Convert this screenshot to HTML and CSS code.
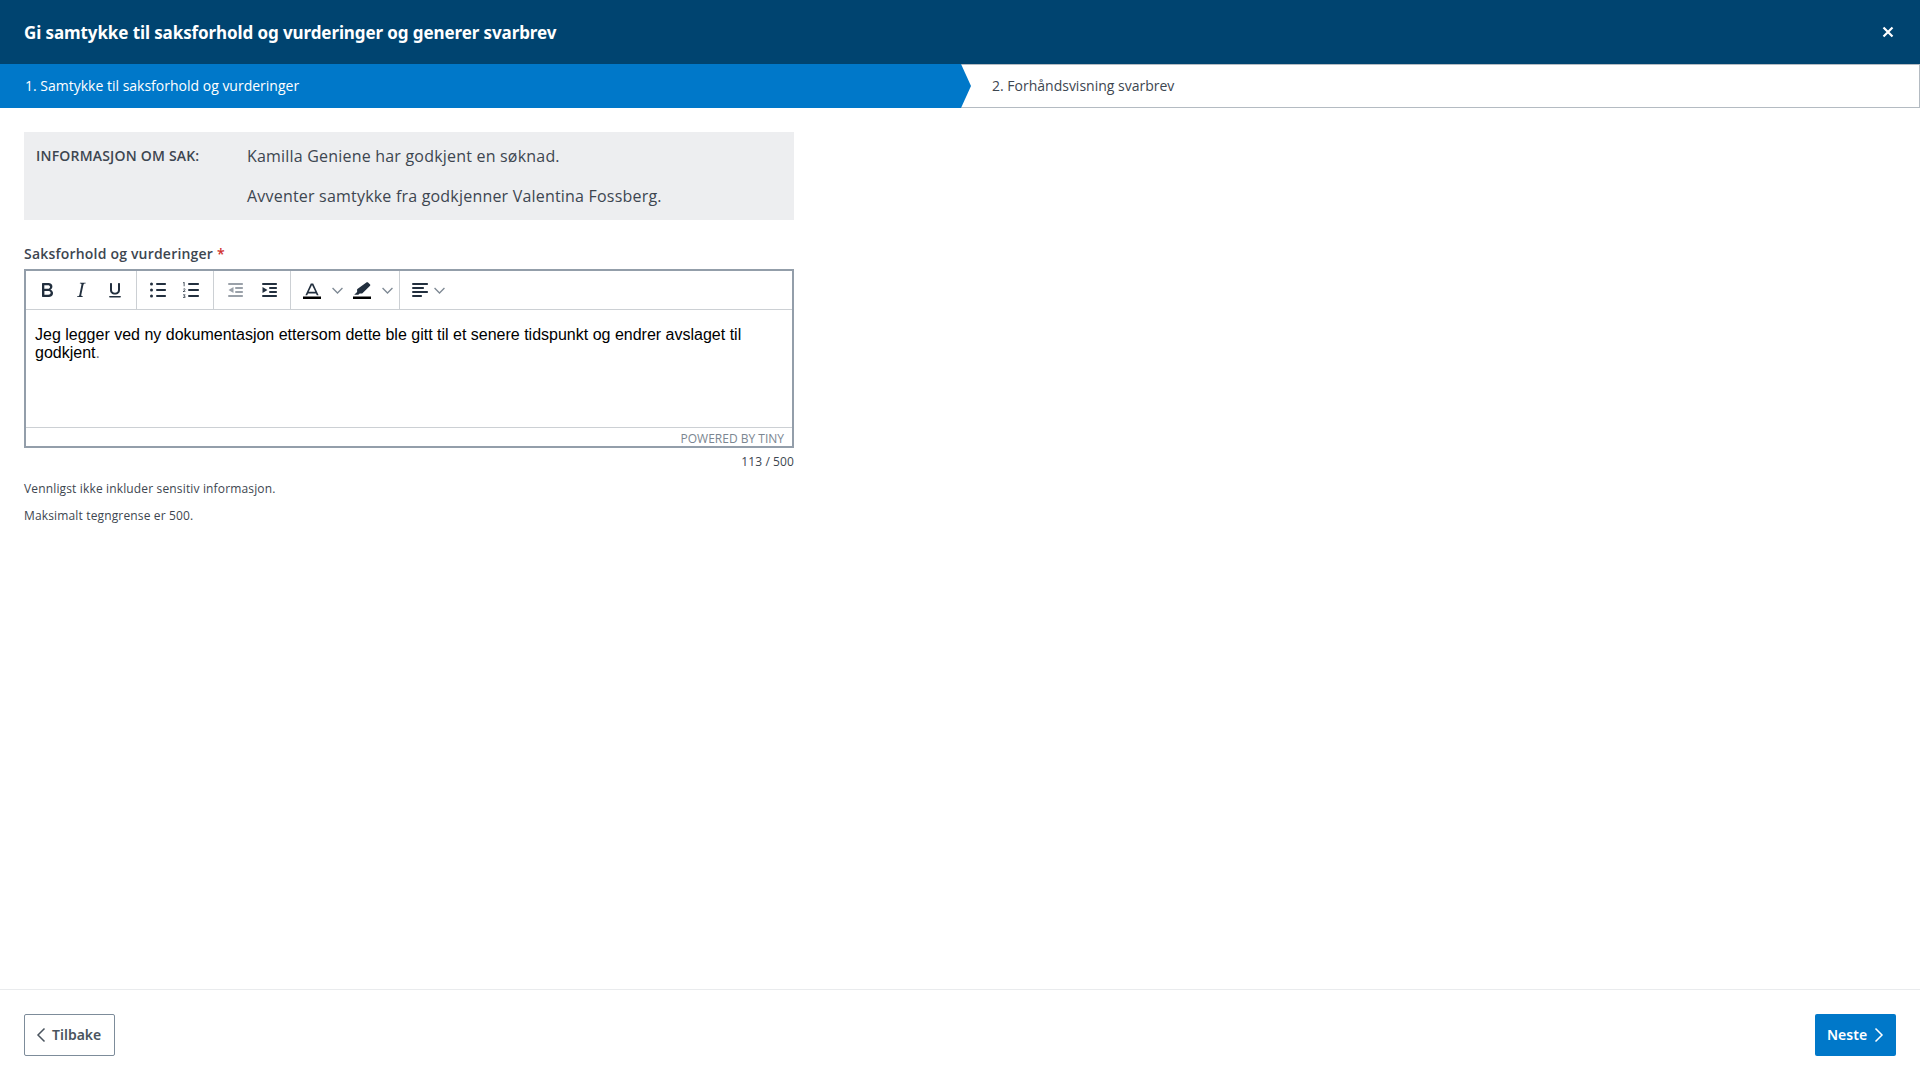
FILE: index.html
```html
<!DOCTYPE html>
<html lang="no">
<head>
<meta charset="utf-8">
<title>Gi samtykke</title>
<link rel="stylesheet" href="styles.css">
</head>
<body>
<div class="modal">
  <header class="modal-head">
    <h1 class="modal-title">Gi samtykke til saksforhold og vurderinger og generer svarbrev</h1>
    <svg class="close-icon" viewBox="0 0 12 12" width="12" height="12"><path d="M1.5 1.5l9 9M10.5 1.5l-9 9"/></svg>
  </header>
  <nav class="steps">
    <div class="step step-active">1. Samtykke til saksforhold og vurderinger</div>
    <div class="step step-next">2. Forhåndsvisning svarbrev</div>
  </nav>
  <main class="modal-body">
    <section class="info">
      <div class="info-label">INFORMASJON OM SAK:</div>
      <div class="info-values">
        <p class="info-line">Kamilla Geniene har godkjent en søknad.</p>
        <p class="info-line">Avventer samtykke fra godkjenner Valentina Fossberg.</p>
      </div>
    </section>
    <div class="field-label">Saksforhold og vurderinger <span class="req">*</span></div>
    <div class="editor">
      <div class="toolbar">
        <div class="tgroup">
          <span class="tbtn"><svg class="ico" viewBox="0 0 24 24"><path fill-rule="evenodd" d="M7.8 19c-.3 0-.5 0-.6-.2l-.2-.5V5.7c0-.2 0-.4.2-.5l.6-.2h5c1.5 0 2.7.3 3.5 1 .7.6 1.1 1.4 1.1 2.5a3 3 0 0 1-.6 1.9c-.4.6-1 1-1.6 1.2.4.1.9.3 1.3.6s.8.7 1 1.2c.4.4.5 1 .5 1.6 0 1.3-.4 2.3-1.3 3-.8.7-2.1 1-3.8 1H7.8zm5-8.3c.6 0 1.2-.1 1.6-.5.4-.3.6-.7.6-1.3 0-1.1-.8-1.7-2.3-1.7H9.3v3.5h3.4zm.5 6c.7 0 1.3-.1 1.7-.4.4-.4.6-.9.6-1.5s-.2-1-.7-1.4c-.4-.3-1-.4-2-.4H9.4v3.8h4z"/></svg></span>
          <span class="tbtn"><svg class="ico" viewBox="0 0 24 24"><path d="M16.7 4.7l-.1.9h-.3c-.6 0-1 0-1.4.3-.3.3-.4.6-.5 1.1l-2.1 9.8v.6c0 .5.4.8 1.4.8h.2l-.2.8H8l.2-.8h.2c1.1 0 1.8-.5 2-1.5l2-9.8.1-.5c0-.6-.4-.8-1.4-.8h-.3l.2-.9h5.8z"/></svg></span>
          <span class="tbtn"><svg class="ico" viewBox="0 0 24 24"><path d="M16 5c.6 0 1 .4 1 1v6c0 2.8-2.2 4.6-5 4.6s-5-1.8-5-4.6V6c0-.6.4-1 1-1s1 .4 1 1v6c0 1.7 1.3 2.8 3 2.8s3-1.1 3-2.8V6c0-.6.4-1 1-1zM7 18h10c.6 0 1 .3 1 .8s-.4.8-1 .8H7c-.6 0-1-.3-1-.8s.4-.8 1-.8z"/></svg></span>
        </div>
        <div class="tgroup">
          <span class="tbtn"><svg class="ico" viewBox="0 0 24 24"><path d="M11 5h8c.6 0 1 .4 1 1s-.4 1-1 1h-8a1 1 0 0 1 0-2zm0 6h8c.6 0 1 .4 1 1s-.4 1-1 1h-8a1 1 0 0 1 0-2zm0 6h8c.6 0 1 .4 1 1s-.4 1-1 1h-8a1 1 0 0 1 0-2z"/><circle cx="5.5" cy="6" r="1.5"/><circle cx="5.5" cy="12" r="1.5"/><circle cx="5.5" cy="18" r="1.5"/></svg></span>
          <span class="tbtn tbtn-tight"><svg class="ico" viewBox="0 0 24 24"><path d="M10 17h9c.6 0 1 .4 1 1s-.4 1-1 1h-9a1 1 0 0 1 0-2zm0-6h9c.6 0 1 .4 1 1s-.4 1-1 1h-9a1 1 0 0 1 0-2zm0-6h9c.6 0 1 .4 1 1s-.4 1-1 1h-9a1 1 0 0 1 0-2zM5.5 4v4.2H4.7V5L4 5.2v-.6L5.4 4zM4 11.3c.2-.5.7-.8 1.2-.8.7 0 1.2.4 1.2 1 0 .4-.2.7-.6 1.1l-.8.8h1.5v.6H4v-.5l1.3-1.3c.3-.3.4-.5.4-.7 0-.3-.2-.4-.5-.4-.2 0-.4.1-.6.4zM4 16.500h2.400v.5l-1 .9c.6.1 1.100.5 1.100 1.100 0 .7-.6 1.100-1.300 1.100-.5 0-1-.2-1.300-.6l.5-.4c.2.3.5.4.8.4.3 0 .6-.2.6-.5s-.3-.5-.7-.5h-.4v-.5l.9-.8H4z"/></svg></span>
        </div>
        <div class="tgroup">
          <span class="tbtn"><svg class="ico ico-off" viewBox="0 0 24 24"><path d="M6 5h13c.6 0 1 .4 1 1s-.4 1-1 1H6a1 1 0 0 1 0-2zm7 4h6c.6 0 1 .4 1 1s-.4 1-1 1h-6a1 1 0 0 1 0-2zm0 4h6c.6 0 1 .4 1 1s-.4 1-1 1h-6a1 1 0 0 1 0-2zm-7 4h13c.6 0 1 .4 1 1s-.4 1-1 1H6a1 1 0 0 1 0-2zM10.500 9v6L5.500 12z"/></svg></span>
          <span class="tbtn"><svg class="ico" viewBox="0 0 24 24"><path d="M6 5h13c.6 0 1 .4 1 1s-.4 1-1 1H6a1 1 0 0 1 0-2zm7 4h6c.6 0 1 .4 1 1s-.4 1-1 1h-6a1 1 0 0 1 0-2zm0 4h6c.6 0 1 .4 1 1s-.4 1-1 1h-6a1 1 0 0 1 0-2zm-7 4h13c.6 0 1 .4 1 1s-.4 1-1 1H6a1 1 0 0 1 0-2zM5.500 9v6l5-3z"/></svg></span>
        </div>
        <div class="tgroup">
          <span class="tbtn"><svg class="ico" viewBox="0 0 24 24"><path fill-rule="evenodd" d="M8 15.500l-.8 1.800H5.400L10.800 5.500h2.400l5.400 11.800h-1.800l-.8-1.800H8zm.7-1.700h6.600L12 7z"/><rect x="3" y="18.500" width="18" height="2.500" fill="#000"/></svg></span>
          <span class="tchev"><svg class="chev" viewBox="0 0 10 10"><path d="M.5 2.800L5 7.300l4.500-4.500"/></svg></span>
          <span class="tbtn"><svg class="ico" viewBox="0 0 24 24"><path d="M17.800 4.300l2.300 2.300c.3.300.3.800 0 1.100l-7.400 7.400c-.2.200-.4.300-.6.300H9.700l-1.400 1.400H4.200l2.900-2.900v-2.300c0-.2.100-.4.300-.6l9.300-6.700c.3-.2.700-.2 1.100 0z"/><rect x="3" y="18.500" width="18" height="2.500" fill="#000"/></svg></span>
          <span class="tchev"><svg class="chev" viewBox="0 0 10 10"><path d="M.5 2.800L5 7.300l4.500-4.500"/></svg></span>
        </div>
        <div class="tgroup tgroup-last">
          <span class="tselect">
            <svg class="ico" viewBox="0 0 24 24"><path d="M5 5h14c.6 0 1 .4 1 1s-.4 1-1 1H5a1 1 0 0 1 0-2zm0 4h10c.6 0 1 .4 1 1s-.4 1-1 1H5a1 1 0 0 1 0-2zm0 4h14c.6 0 1 .4 1 1s-.4 1-1 1H5a1 1 0 0 1 0-2zm0 4h8c.6 0 1 .4 1 1s-.4 1-1 1H5a1 1 0 0 1 0-2z"/></svg>
            <svg class="chev" viewBox="0 0 10 10"><path d="M.5 2.800L5 7.300l4.500-4.500"/></svg>
          </span>
        </div>
      </div>
      <div class="editor-content">Jeg legger ved ny dokumentasjon ettersom dette ble gitt til et senere tidspunkt og endrer avslaget til godkjent<span class="faint">.</span></div>
      <div class="statusbar">POWERED BY TINY</div>
    </div>
    <div class="counter">113 / 500</div>
    <p class="hint hint-first">Vennligst ikke inkluder sensitiv informasjon.</p>
    <p class="hint">Maksimalt tegngrense er 500.</p>
  </main>
  <footer class="modal-foot">
    <button class="btn btn-back" type="button"><svg class="btn-ico" viewBox="0 0 12 16"><path d="M9.500 1.500L3 8l6.500 6.500"/></svg>Tilbake</button>
    <button class="btn btn-next" type="button">Neste<svg class="btn-ico" viewBox="0 0 12 16"><path d="M2.500 1.500L9 8l-6.500 6.500"/></svg></button>
  </footer>
</div>
</body>
</html>
```
FILE: styles.css
```css
* { box-sizing: border-box; }
html, body { margin: 0; height: 100%; }
body { background: #fff; color: #3d4650; font-family: "Open Sans", "Noto Sans", sans-serif; }
.modal { display: flex; flex-direction: column; height: 100vh; overflow: hidden; }

.modal-head { flex: none; height: 64px; background: #004470; color: #fff; display: flex; align-items: center; justify-content: space-between; padding: 0 26px 0 24px; }
.modal-title { margin: 0; font-family: "Noto Sans", sans-serif; font-size: 17px; font-weight: 700; letter-spacing: -0.1px; }
.close-icon { fill: none; stroke: #fff; stroke-width: 2.200; margin-top: -1px; }

.steps { flex: none; height: 44px; display: flex; font-size: 14px; }
.step { display: flex; align-items: center; padding-bottom: 1px; }
.step-active { position: relative; z-index: 1; flex: none; width: 971px; margin-right: -10px; padding-left: 25px; background: #0078c9; color: #fff; clip-path: polygon(0 0, 961px 0, 100% 50%, 961px 100%, 0 100%); }
.step-next { flex: 1; padding-left: 31px; background: #fff; border: 1px solid #b4bbc2; border-left: 0; color: #3d4650; }

.modal-body { flex: 1; padding: 24px 24px 0; }
.info { width: 770px; height: 88px; background: #edeef0; display: flex; padding: 0 12px; }
.info-label { flex: none; width: 211px; font-size: 14px; font-weight: 600; line-height: 20px; padding-top: 14px; letter-spacing: 0.2px; }
.info-line { margin: 0 0 18px; font-size: 16px; line-height: 22px; letter-spacing: 0.2px; }
.info-values { padding-top: 13px; }

.field-label { margin-top: 24px; font-size: 14px; font-weight: 600; line-height: 20px; letter-spacing: 0.2px; }
.req { color: #d0312d; }

.editor { width: 770px; height: 179px; margin-top: 5px; border: 2px solid #939eaa; display: flex; flex-direction: column; }
.toolbar { flex: none; height: 39px; display: flex; border-bottom: 1px solid #ccd0d4; }
.tgroup { display: flex; align-items: center; padding: 0 4px; border-right: 1px solid #ccd0d4; }
.tgroup-last { border-right: 0; }
.tbtn { width: 34px; display: flex; justify-content: center; }
.tbtn-tight .ico { margin-left: -2px; }
.tchev { width: 16px; display: flex; justify-content: center; }
.tselect { display: flex; align-items: center; padding-left: 4px; gap: 2px; }
.ico { width: 24px; height: 24px; fill: #222f3e; display: block; }
.ico-off { fill: #9aa1a9; }
.chev { width: 11px; height: 11px; fill: none; stroke: #7e8994; stroke-width: 1.200; display: block; }

.editor-content { flex: 1; padding: 16px 9px 0; font-family: "Liberation Sans", Arial, sans-serif; font-size: 16px; line-height: 18px; color: #000; }
.faint { color: #777; }
.statusbar { flex: none; height: 19px; border-top: 1px solid #ccd0d4; padding-right: 8px; font-size: 12px; line-height: 21px; color: #7b8691; text-align: right; }

.counter { width: 770px; margin-top: 4px; font-size: 12px; line-height: 20px; text-align: right; color: #3d4650; letter-spacing: 0.1px; }
.hint { margin: 0; font-size: 12px; line-height: 16px; margin-top: 11px; letter-spacing: 0.15px; }
.hint-first { margin-top: 9px; }

.modal-foot { flex: none; height: 91px; border-top: 1px solid #e9ebed; display: flex; align-items: flex-start; justify-content: space-between; padding: 24px 24px 0; }
.btn { height: 42px; display: flex; align-items: center; font-family: "Noto Sans", sans-serif; font-size: 14px; font-weight: 600; line-height: 18px; border-radius: 2px; padding: 0 0 1px; cursor: pointer; }
.btn-ico { width: 12px; height: 16px; fill: none; stroke: currentColor; stroke-width: 1.500; margin-top: 1px; }
.btn-back { width: 91px; background: #fff; border: 1px solid #7d8c9a; color: #4a545e; padding-left: 10px; gap: 5px; }
.btn-next { width: 81px; background: #0078c9; border: 0; color: #fff; padding-left: 12px; gap: 6px; }
```
